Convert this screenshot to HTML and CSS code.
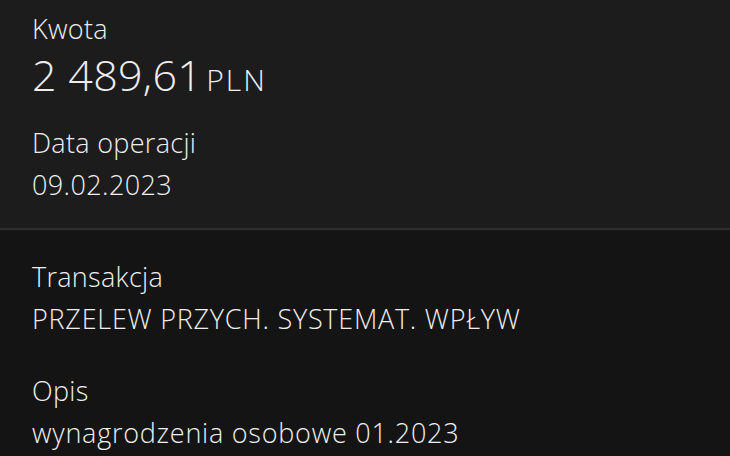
FILE: index.html
```html
<!DOCTYPE html>
<html lang="pl">
<head>
<meta charset="utf-8">
<title>Szczegóły operacji</title>
<link rel="stylesheet" href="styles.css">
</head>
<body>
<main class="details">
  <section class="card card-top">
    <div class="field">
      <div class="label">Kwota</div>
      <div class="amount"><span class="amount-value">2 489,61</span> <span class="currency">PLN</span></div>
    </div>
    <div class="field field-date">
      <div class="label">Data operacji</div>
      <div class="value value-date">09.02.2023</div>
    </div>
  </section>
  <section class="card card-bottom">
    <div class="field">
      <div class="label">Transakcja</div>
      <div class="value">PRZELEW PRZYCH. SYSTEMAT. WPŁYW</div>
    </div>
    <div class="field field-desc">
      <div class="label">Opis</div>
      <div class="value">wynagrodzenia osobowe 01.2023</div>
    </div>
  </section>
</main>
</body>
</html>
```

FILE: styles.css
```css
html, body {
  margin: 0;
  padding: 0;
  background: #141414;
}
body {
  font-family: "Open Sans", "Noto Sans", sans-serif;
  color: #eeeeee;
  width: 730px;
  height: 456px;
  overflow: hidden;
}
.details {
  display: flex;
  flex-direction: column;
}
.card {
  padding: 0 32px;
}
.card-top {
  background: #1c1c1c;
  border-bottom: 2px solid #2e2e2e;
  height: 230px;
  box-sizing: border-box;
  padding-top: 8px;
}
.card-bottom {
  background: #141414;
  padding-top: 26px;
}
.field {
  display: flex;
  flex-direction: column;
}
.label {
  font-size: 27px;
  font-weight: 300;
  line-height: 42px;
  letter-spacing: 0.3px;
}
.value {
  font-size: 27px;
  font-weight: 300;
  line-height: 42px;
  letter-spacing: 0.75px;
}
.value-date {
  letter-spacing: 0.4px;
}
.amount {
  line-height: 50px;
  font-weight: 300;
}
.amount-value {
  font-size: 43px;
  letter-spacing: 0.3px;
}
.currency {
  font-size: 30px;
  letter-spacing: 2px;
}
.field-date {
  margin-top: 12px;
}
.field-desc {
  margin-top: 30px;
}
```
